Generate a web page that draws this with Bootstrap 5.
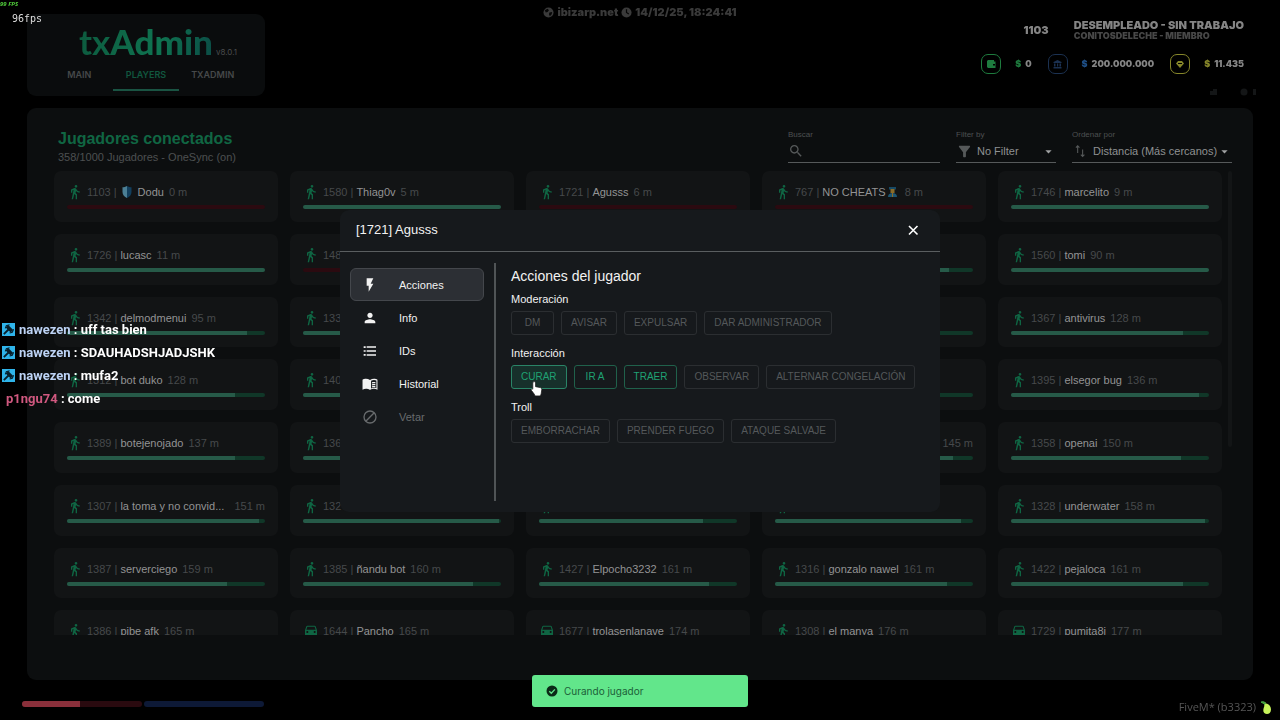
<!DOCTYPE html>
<html lang="es" data-bs-theme="dark">
<head>
<meta charset="utf-8">
<meta name="viewport" content="width=device-width, initial-scale=1">
<title>txAdmin - Jugadores</title>
<link href="https://cdn.jsdelivr.net/npm/bootstrap@5.3.0/dist/css/bootstrap.min.css" rel="stylesheet">
<style>
  body { background: #000; color: #8f9192; font: 11px/16px "Liberation Sans", Arial, sans-serif; overflow: hidden; }
  svg { display: block; flex: none; }
  .shell { height: 100vh; padding: 14px 27px 40px; gap: 12px; }

  /* header with the tabs */
  .top-panel { width: 238px; height: 82px; flex: none; background: #0a0c0d; border-radius: 9px; }
  .brand { font: 700 35px/36px Lato, sans-serif; background: linear-gradient(100deg, #0d5a3e, #0f7350 60%, #0b4d46); -webkit-background-clip: text; background-clip: text; color: transparent; margin-top: 9px; }
  .brand b { font-weight: 900; }
  .version { left: 100%; bottom: 2px; font: 8px/10px Inter, sans-serif; color: #4a4d4e; margin-left: 3px; }
  .top-tabs { width: 200px; margin-top: auto; margin-bottom: 5px; }
  .top-tabs a { flex: 1; height: 26px; padding-top: 4px; text-align: center; text-decoration: none; font: 600 9px/12px Inter, sans-serif; color: #46494a; }
  .top-tabs a.active { color: #11573f; border-bottom: 2px solid #1a5443; }

  /* players panel */
  .players { background: #0c0e0f; border-radius: 9px; padding: 21px 21px 45px 27px; min-height: 0; }
  .players h1 { font-size: 16px; line-height: 20px; font-weight: 700; color: #106643; margin: 0; }
  .muted-text { color: #4d5051; }
  .filters { gap: 16px; padding-top: 1px; }
  .filters label { display: block; font-size: 8px; line-height: 10px; color: #4d5051; }
  .field { height: 23px; border-bottom: 1px solid #56595a; }
  .field input, .field select { appearance: none; background: transparent; border: 0; outline: 0; color: #8f9192; padding: 0; font-size: 11px; height: 20px; min-width: 0; }
  .grow-field { flex: 1; }
  .w-search { width: 152px; } .w-filter { width: 100px; } .w-sort { width: 160px; }

  .list-clip { overflow: hidden; min-height: 0; margin-top: 6px; }
  .player-grid { flex: 1; height: 490px; display: grid; grid-template-columns: repeat(5, minmax(0, 1fr)); grid-template-rows: repeat(8, 1fr); gap: 12px; }
  .player-card { background: #121415; border-radius: 7px; padding: 12px 13px 0; }
  .player-row { height: 18px; color: #46494b; white-space: nowrap; }
  .player-row svg { fill: #0f6543; margin-right: 4px; }
  .pname { color: #929394; margin: 0 5px 0 3px; min-width: 0; }
  .hp { height: 4px; margin-top: 4px; border-radius: 2px; background: #103728; overflow: hidden; }
  .hp div { height: 100%; background: #265a48; }
  .hp.down { background: #2b0a10; }
  .thumb { width: 4px; height: 276px; margin-left: 6px; border-radius: 2px; background: #131516; }

  /* player dialog */
  .overlay { z-index: 10; padding-top: 2px; }
  .player-dialog { width: 600px; min-height: 302px; background: #16191c; border-radius: 9px; color: #fff; }
  .dialog-head { height: 42px; padding: 0 16px 2px; border-bottom: 1px solid #5a5e60; }
  .dialog-head h2 { font-size: 13px; line-height: 20px; font-weight: 400; margin: 0; color: #f2f2f2; }
  .icon-only { background: none; border: 0; padding: 0; color: #fff; }
  .dialog-body { padding: 11px 10px; }
  .side-nav { width: 134px; padding-top: 5px; margin-right: 10px; }
  .side-nav button { height: 33px; padding: 0 11px; gap: 21px; border: 1px solid transparent; background: none; border-radius: 6px; color: #f2f2f2; text-align: left; }
  .side-nav button.active { background: #2c2f34; border-color: #44474c; }
  .side-nav button:disabled { color: #686b6d; }
  .rule { width: 2px; background: #505456; }
  .actions { padding: 3px 0 0 15px; }
  .actions h3 { font-size: 14px; line-height: 20px; font-weight: 400; margin: 0 0 5px; color: #f2f2f2; }
  .actions h4 { font-size: 11px; line-height: 16px; font-weight: 400; margin: 0 0 4px; color: #f2f2f2; }
  .action-row { gap: 7px; margin-bottom: 10px; }
  .act { height: 24px; min-width: 43px; padding: 0 9px; font-size: 10px; line-height: 22px; border: 1px solid #2b2e31; border-radius: 3px; background: none; color: #54585a; }
  .act-on { border-color: #20614b; color: #1fa274; }
  .act-hover { border-color: #2a8467; background: #17302b; }
  .pointer { left: 19px; top: 15px; }

  /* game overlays */
  .float-ui { position: absolute; z-index: 20; }
  .hud-font { font-family: Inter, sans-serif; font-weight: 900; }
  .fps-game { left: 0; top: 0; font: italic 700 6px/9px "Open Sans", sans-serif; color: #4fc93a; }
  .fps-cap { left: 12px; top: 12px; font: 10px/14px "DejaVu Sans Mono", monospace; color: #dcdcdc; }
  .clock { top: 4px; left: 0; right: 0; font-size: 11px; color: #3a3a3a; gap: 3px; }
  .wallet { top: 19px; right: 36px; color: #858585; }
  .who-row { gap: 25px; margin-bottom: 13px; }
  .wallet .job { font-size: 11px; line-height: 12px; }
  .wallet .rank { font-size: 9px; line-height: 10px; color: #484848; }
  .money-row { gap: 16px; font-size: 9px; line-height: 12px; }
  .money { gap: 14px; }
  .chip { width: 20px; height: 20px; border: 1px solid; border-radius: 7px; }
  .c-green { color: #1e7b3e; } .c-blue { color: #1f4f86; } .c-gold { color: #86862a; }
  .chip.c-blue { color: #1b3151; }
  .status-icons { top: 88px; right: 22px; gap: 22px; color: #141617; }
  .chat { left: 2px; top: 318px; font: 700 13px/23px Roboto, sans-serif; color: #fff; }
  .chat .who { color: #bdd3f5; } .chat .who2 { color: #d0587f; }
  .vitals { left: 22px; bottom: 13px; gap: 2px; }
  .vital { width: 120px; height: 6px; border-radius: 3px; overflow: hidden; background: #2a0a0f; }
  .vital div { height: 100%; background: #8a303b; }
  .vital.blue { background: #0d1936; }
  .notice { left: 0; right: 0; bottom: 13px; }
  .notice > div { width: 216px; height: 32px; padding: 0 14px; gap: 6px; border-radius: 3px; background: #62e68b; color: #1c6038; font: 10px/16px Inter, sans-serif; }
  .build { right: 8px; bottom: 5px; font: 11px/16px "Open Sans", sans-serif; color: #565656; gap: 5px; }
</style>
</head>
<body>
<svg class="d-none">
  <symbol id="walk" viewBox="0 0 24 24"><path d="M13.5 5.5c1.1 0 2-.9 2-2s-.9-2-2-2-2 .9-2 2 .9 2 2 2zM9.8 8.9L7 23h2.1l1.8-8 2.1 2v6h2v-7.5l-2.1-2 .6-3C14.8 12 16.8 13 19 13v-2c-1.9 0-3.5-1-4.3-2.4l-1-1.6c-.4-.6-1-1-1.7-1-.3 0-.5.1-.8.1L6 8.3V13h2V9.6l1.8-.7"/></symbol>
  <symbol id="car" viewBox="0 0 24 24"><path d="M18.92 5.01C18.72 4.42 18.16 4 17.5 4h-11c-.66 0-1.21.42-1.42 1.01L3 11v8c0 .55.45 1 1 1h1c.55 0 1-.45 1-1v-1h12v1c0 .55.45 1 1 1h1c.55 0 1-.45 1-1v-8l-2.08-5.99zM6.5 15c-.83 0-1.5-.67-1.5-1.5S5.67 12 6.5 12s1.5.67 1.5 1.5S7.33 15 6.5 15zm11 0c-.83 0-1.5-.67-1.5-1.5s.67-1.5 1.5-1.5 1.5.67 1.5 1.5-.67 1.5-1.5 1.5zM5 10l1.5-4.5h11L19 10H5z"/></symbol>
  <symbol id="hammer" viewBox="0 0 12 12"><rect width="12" height="12" fill="#2fb4ea"/><path d="M1.700 10.300 6 6" stroke="#08202c" stroke-width="1.700"/><path d="m4.600 3 4.600 4.600" stroke="#08202c" stroke-width="3.400"/><path d="m3 5 1-2.500 3-.9M7 9.300l2.500-.8 1.200-2.700" stroke="#08202c" fill="none"/></symbol>
</svg>

<div class="shell d-flex flex-column">
  <header class="top-panel d-flex flex-column align-items-center">
    <div class="position-relative"><div class="brand">tx<b>Admin</b></div><span class="version position-absolute">v8.0.1</span></div>
    <nav class="top-tabs d-flex"><a href="#">MAIN</a><a href="#" class="active">PLAYERS</a><a href="#">TXADMIN</a></nav>
  </header>

  <main class="players d-flex flex-column flex-grow-1">
    <div class="d-flex justify-content-between">
      <div class="ps-1">
        <h1>Jugadores conectados</h1>
        <div class="muted-text">358/1000 Jugadores - OneSync (on)</div>
      </div>
      <div class="filters d-flex">
        <div class="w-search"><label for="q">Buscar</label>
          <div class="field d-flex align-items-center"><svg width="16" height="16" viewBox="0 0 24 24" fill="#56595a"><path d="M15.500 14h-.79l-.28-.27C15.410 12.590 16 11.110 16 9.500 16 5.910 13.090 3 9.500 3S3 5.910 3 9.500 5.910 16 9.500 16c1.610 0 3.090-.59 4.230-1.570l.27.28v.79l5 4.990L20.490 19l-4.990-5zm-6 0C7.010 14 5 11.990 5 9.500S7.010 5 9.500 5 14 7.010 14 9.500 11.990 14 9.500 14z"/></svg><input id="q" class="grow-field" type="text"></div></div>
        <div class="w-filter"><label for="f">Filter by</label>
          <div class="field d-flex align-items-center"><svg class="me-1" width="17" height="17" viewBox="0 0 24 24" fill="#56595a"><path d="M4.250 5.610C6.270 8.200 10 13 10 13v6c0 .55.45 1 1 1h2c.55 0 1-.45 1-1v-6s3.720-4.800 5.740-7.390c.51-.66.04-1.610-.79-1.610H5.040c-.83 0-1.300.95-.79 1.610z"/></svg><select id="f" class="grow-field"><option>No Filter</option></select><svg width="15" height="15" viewBox="0 0 24 24" fill="#a0a2a3"><path d="m7 10 5 5 5-5z"/></svg></div></div>
        <div class="w-sort"><label for="s">Ordenar por</label>
          <div class="field d-flex align-items-center"><svg class="me-1" width="17" height="17" viewBox="0 0 24 24" fill="none" stroke="#56595a" stroke-width="1.500"><path d="M8 14V4M5.500 6.500 8 4l2.500 2.500M15 9v10m-2.500-2.500L15 19l2.500-2.500"/></svg><select id="s" class="grow-field"><option>Distancia (Más cercanos)</option></select><svg width="15" height="15" viewBox="0 0 24 24" fill="#a0a2a3"><path d="m7 10 5 5 5-5z"/></svg></div></div>
      </div>
    </div>
    <div class="list-clip d-flex flex-grow-1">
      <div class="player-grid" id="grid"></div>
      <div class="thumb"></div>
    </div>
  </main>
</div>

<div class="overlay position-fixed top-0 start-0 end-0 bottom-0 d-flex align-items-center justify-content-center">
  <section class="player-dialog d-flex flex-column" role="dialog" aria-labelledby="dlgTitle">
    <div class="dialog-head d-flex align-items-center justify-content-between">
      <h2 id="dlgTitle">[1721] Agusss</h2>
      <button class="icon-only" type="button" aria-label="Cerrar"><svg width="22" height="22" viewBox="0 0 22 22" stroke="currentColor" stroke-width="1.600"><path d="m7 7 8.500 8.500m0-8.500L7 15.500"/></svg></button>
    </div>
    <div class="dialog-body d-flex flex-grow-1">
      <div class="side-nav d-flex flex-column">
        <button class="active d-flex align-items-center" type="button"><svg width="16" height="16" viewBox="0 0 24 24" fill="currentColor"><path d="M7 2v11h3v9l7-12h-4l4-8z"/></svg>Acciones</button>
        <button class="d-flex align-items-center" type="button"><svg width="16" height="16" viewBox="0 0 24 24" fill="currentColor"><path d="M12 12c2.210 0 4-1.790 4-4s-1.790-4-4-4-4 1.790-4 4 1.790 4 4 4zm0 2c-2.670 0-8 1.340-8 4v2h16v-2c0-2.660-5.330-4-8-4z"/></svg>Info</button>
        <button class="d-flex align-items-center" type="button"><svg width="16" height="16" viewBox="0 0 24 24" fill="currentColor"><path d="M2.500 5h3v2.500h-3zm0 5.700h3v2.500h-3zm0 5.800h3V19h-3zM7 19h14v-2H7v2zm0-6h14v-2H7v2zm0-8v2h14V5H7z"/></svg>IDs</button>
        <button class="d-flex align-items-center" type="button"><svg width="16" height="16" viewBox="0 0 24 24" fill="currentColor"><path d="M12 6C10 4.700 8 4.300 6 4.300S2 4.800.8 5.800V20.500C2.500 19.600 4.300 19.300 6 19.300s4 .4 6 1.700z"/><path fill-rule="evenodd" d="M12 6c2-1.300 4-1.700 6-1.700s4 .5 5.200 1.500v14.700c-1.700-.9-3.500-1.200-5.200-1.200s-4 .4-6 1.700zm1.600 1v11.600c1.500-.7 3-.9 4.400-.9 1.300 0 2.500.2 3.600.5V6.700c-1-.5-2.300-.8-3.600-.8-1.500 0-3 .3-4.400 1.100z"/><path d="M15 9.500c1.600-.6 3.400-.7 5.200-.3V11c-1.800-.4-3.600-.3-5.200.3zm0 3c1.600-.6 3.400-.7 5.200-.3V14c-1.800-.4-3.600-.3-5.200.3zm0 3c1.600-.6 3.400-.7 5.200-.3V17c-1.800-.4-3.600-.3-5.200.3z"/></svg>Historial</button>
        <button class="d-flex align-items-center" type="button" disabled><svg width="16" height="16" viewBox="0 0 24 24" fill="none" stroke="currentColor" stroke-width="2"><circle cx="12" cy="12" r="9"/><path d="m5.700 18.300 12.600-12.600"/></svg>Vetar</button>
      </div>
      <div class="rule"></div>
      <div class="actions flex-grow-1">
        <h3>Acciones del jugador</h3>
        <h4>Moderación</h4>
        <div class="action-row d-flex"><button class="act" disabled>DM</button><button class="act" disabled>AVISAR</button><button class="act" disabled>EXPULSAR</button><button class="act" disabled>DAR ADMINISTRADOR</button></div>
        <h4>Interacción</h4>
        <div class="action-row d-flex"><div class="position-relative"><button class="act act-on act-hover">CURAR</button>
          <svg class="pointer position-absolute" width="13" height="17" viewBox="0 0 14 18"><path d="M4.500 1.500c1 0 1.500.6 1.500 1.500v4l5 1c1.200.3 1.800 1 1.700 2.200L12 15l-1 2H5.500L4.500 15 1.500 11c-.8-1.200.4-2.200 1.500-1.300V3c0-.9.5-1.500 1.500-1.500z" fill="#fff" stroke="#1a1a1a" stroke-width=".8"/></svg></div><button class="act act-on">IR A</button><button class="act act-on">TRAER</button><button class="act" disabled>OBSERVAR</button><button class="act" disabled>ALTERNAR CONGELACIÓN</button></div>
        <h4>Troll</h4>
        <div class="action-row d-flex"><button class="act" disabled>EMBORRACHAR</button><button class="act" disabled>PRENDER FUEGO</button><button class="act" disabled>ATAQUE SALVAJE</button></div>
      </div>
    </div>
  </section>
</div>

<div class="float-ui fps-game">99 FPS</div>
<div class="float-ui fps-cap">96fps</div>

<div class="float-ui clock hud-font d-flex justify-content-center align-items-center">
  <svg width="11" height="11" viewBox="0 0 12 12"><circle cx="6" cy="6" r="5.500" fill="#3a3a3a"/><path d="M2 3.500 5 2l1.500 1.500L5 5.500 3 6zM7 6l3-.5L9.500 8 7.500 10 6.500 8z" fill="#060606"/></svg><span>ibizarp.net</span>
  <svg width="11" height="11" viewBox="0 0 12 12"><circle cx="6" cy="6" r="5.500" fill="#3a3a3a"/><path d="M6 2.500V6l2.500 1.700" stroke="#060606" stroke-width="1.300" fill="none"/></svg><span>14/12/25, 18:24:41</span>
</div>

<div class="float-ui wallet hud-font">
  <div class="who-row d-flex align-items-center justify-content-end"><span class="job">1103</span><div><div class="job">DESEMPLEADO - SIN TRABAJO</div><div class="rank">CONITOSDELECHE - MIEMBRO</div></div></div>
  <div class="money-row d-flex justify-content-end">
    <div class="money d-flex align-items-center"><span class="chip c-green d-flex align-items-center justify-content-center"><svg width="9" height="8" viewBox="0 0 9 8" fill="currentColor"><path d="M1 0h6v1.500h1.500v6.500H1L0 7V1zm5 4v1.500h2V4z" fill-rule="evenodd"/></svg></span><span><span class="c-green me-1">$</span>0</span></div>
    <div class="money d-flex align-items-center"><span class="chip c-blue d-flex align-items-center justify-content-center"><svg width="9" height="9" viewBox="0 0 9 9" fill="currentColor"><path d="m4.500 0 4 2v1h-8V2zM1 3.500h1.500v3H1zm3 0h1.200v3H4zm2.500 0H8v3H6.500zM.5 7h8v1.500h-8z"/></svg></span><span><span class="c-blue me-1">$</span>200.000.000</span></div>
    <div class="money d-flex align-items-center"><span class="chip c-gold d-flex align-items-center justify-content-center"><svg width="8" height="7" viewBox="0 0 8 7" fill="currentColor"><path d="M2 0h4l2 2.500L4 7 0 2.500zm0 2h4v1H2z" fill-rule="evenodd"/></svg></span><span><span class="c-gold me-1">$</span>11.435</span></div>
  </div>
</div>
<div class="float-ui status-icons d-flex"><svg width="8" height="8" viewBox="0 0 8 8" fill="currentColor"><path d="M0 3h3V1h4v6H0z"/></svg><svg width="18" height="8" viewBox="0 0 18 8" fill="currentColor"><circle cx="4" cy="4" r="3.500"/><path d="M13 1h3v6h-3z"/></svg></div>

<div class="float-ui chat">
  <div class="d-flex align-items-center"><svg width="13" height="13" class="me-1"><use href="#hammer"/></svg><span><span class="who">nawezen</span> : uff tas bien</span></div>
  <div class="d-flex align-items-center"><svg width="13" height="13" class="me-1"><use href="#hammer"/></svg><span><span class="who">nawezen</span> : SDAUHADSHJADJSHK</span></div>
  <div class="d-flex align-items-center"><svg width="13" height="13" class="me-1"><use href="#hammer"/></svg><span><span class="who">nawezen</span> : mufa2</span></div>
  <div class="ps-1"><span class="who2">p1ngu74</span> : come</div>
</div>

<div class="float-ui vitals d-flex"><div class="vital"><div style="width:48%"></div></div><div class="vital blue"></div></div>

<div class="float-ui notice d-flex justify-content-center"><div class="d-flex align-items-center" role="status"><svg width="12" height="12" viewBox="0 0 12 12"><circle cx="6" cy="6" r="5.500" fill="#0b2a17"/><path d="m3.300 6.200 2 2 3.600-3.800" fill="none" stroke="#62e68b" stroke-width="1.300"/></svg>Curando jugador</div></div>

<div class="float-ui build d-flex align-items-center"><span>FiveM* (b3323)</span><svg width="11" height="13" viewBox="0 0 11 13"><path d="M1 1c2-.8 3.500 0 4 1.500C8 3 10 5.500 10 8.500S8 13 6 13s-4-1.500-3.700-4C2.500 7 3.500 5.500 3.300 4 3.200 2.700 2 2 1 2z" fill="#c6f25a"/><path d="M0 .6C2-.4 4.300.4 5 2.500L3.300 4C3 2.500 1.500 2 0 2z" fill="#3f9d3f"/></svg></div>

<script src="https://cdn.jsdelivr.net/npm/bootstrap@5.3.0/dist/js/bootstrap.bundle.min.js"></script>
<script>
  const shield = '<svg width="10" height="12" viewBox="0 0 10 12" style="margin:0 3px 0 5px"><path d="M5 0C3.500 1 2 1.300.5 1.300V6C.5 9 2.500 11 5 12z" style="fill:#4b7f95"/><path d="M5 0c1.500 1 3 1.300 4.500 1.300V6C9.500 9 7.500 11 5 12z" style="fill:#123f5e"/></svg>';
  const officer = '<svg width="9" height="10" viewBox="0 0 9 10" style="margin:0 8px 0 -3px"><path d="M1 0h7v2.500H1z" style="fill:#174a66"/><path d="M2.500 2h4v4h-4z" style="fill:#8a6c2a"/><path d="M0 10c0-3 2-4 4.500-4S9 7 9 10z" style="fill:#1c5674"/><path d="M4 6h1v4H4z" style="fill:#8a6c2a"/></svg>';
  // id, name, distance, health (0 = down), vehicle, icon before name, icon after name
  const players = [
    [1103,'Dodu','0 m',0,0,shield],[1580,'Thiag0v','5 m',100],[1721,'Agusss','6 m',0],[767,'NO CHEATS','8 m',0,0,'',officer],[1746,'marcelito','9 m',100],
    [1726,'lucasc','11 m',100],[148,'','',0],['','','',100],['','','',88],[1560,'tomi','90 m',100],
    [1342,'delmodmenui','95 m',91],[133,'','',90],['','','',90],['','','',83],[1367,'antivirus','128 m',87],
    [1312,'bot duko','128 m',85],[140,'','',90],['','','',90],['','','',80],[1395,'elsegor bug','136 m',95],
    [1389,'botejenojado','137 m',85],[136,'','',90],['','','',90],['','','145 m',90],[1358,'openai','150 m',86],
    [1307,'la toma y no convid...','151 m',97],[132,'','',99],['','','',83],['','','',94],[1328,'underwater','158 m',98],
    [1387,'serverciego','159 m',81],[1385,'ñandu bot','160 m',86],[1427,'Elpocho3232','161 m',86],[1316,'gonzalo nawel','161 m',87],[1422,'pejaloca','161 m',87],
    [1386,'pibe afk','165 m',85],[1644,'Pancho','165 m',90,1],[1677,'trolasenlanave','174 m',90,1],[1308,'el manya','176 m',90],[1729,'pumita8i','177 m',90,1]
  ];
  document.getElementById('grid').innerHTML = players.map(([id, name, dist, hp, car, pre = '', post = '']) => `
    <article class="player-card">
      <div class="player-row d-flex align-items-center"><svg width="16" height="16"><use href="#${car ? 'car' : 'walk'}"/></svg>
        <span>${id}${name ? ' |' : ''}</span>${pre}<span class="pname">${name}</span>${post}<span${name && !name.endsWith('...') ? '' : ' class="ms-auto"'}>${dist}</span></div>
      <div class="hp${hp ? '' : ' down'}"><div style="width:${hp}%"></div></div>
    </article>`).join('');
</script>
</body>
</html>
